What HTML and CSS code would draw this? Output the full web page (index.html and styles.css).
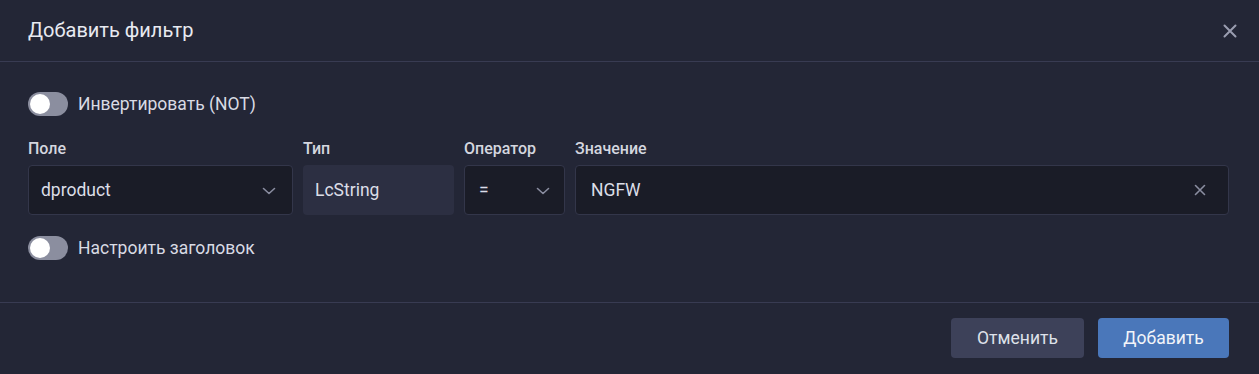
FILE: index.html
```html
<!DOCTYPE html>
<html lang="ru">
<head>
<meta charset="utf-8">
<title>Добавить фильтр</title>
<link rel="stylesheet" href="styles.css">
</head>
<body>
<div class="dialog">
  <div class="header">
    <div class="title">Добавить фильтр</div>
    <button class="close" aria-label="Закрыть">
      <svg width="14" height="14" viewBox="0 0 14 14"><path d="M1.5 1.5 L12.5 12.5 M12.5 1.5 L1.5 12.5" stroke="#9a9db0" stroke-width="2" stroke-linecap="round"/></svg>
    </button>
  </div>
  <div class="body">
    <div class="toggle-row">
      <span class="toggle"><span class="knob"></span></span>
      <span class="toggle-label">Инвертировать (NOT)</span>
    </div>
    <div class="fields">
      <div class="field f-field">
        <div class="label">Поле</div>
        <div class="box select">
          <span class="val">dproduct</span>
          <svg class="chev" width="14" height="8" viewBox="0 0 14 8"><path d="M1.5 1.5 L7 6.5 L12.5 1.5" fill="none" stroke="#8a8da0" stroke-width="1.6" stroke-linecap="round" stroke-linejoin="round"/></svg>
        </div>
      </div>
      <div class="field f-type">
        <div class="label">Тип</div>
        <div class="box readonly"><span class="val">LcString</span></div>
      </div>
      <div class="field f-op">
        <div class="label">Оператор</div>
        <div class="box select">
          <span class="val">=</span>
          <svg class="chev" width="14" height="8" viewBox="0 0 14 8"><path d="M1.5 1.5 L7 6.5 L12.5 1.5" fill="none" stroke="#8a8da0" stroke-width="1.6" stroke-linecap="round" stroke-linejoin="round"/></svg>
        </div>
      </div>
      <div class="field f-value">
        <div class="label">Значение</div>
        <div class="box select">
          <span class="val">NGFW</span>
          <svg class="clear" width="12" height="12" viewBox="0 0 12 12"><path d="M1.5 1.5 L10.5 10.5 M10.5 1.5 L1.5 10.5" stroke="#8a8da0" stroke-width="1.6" stroke-linecap="round"/></svg>
        </div>
      </div>
    </div>
    <div class="toggle-row second">
      <span class="toggle"><span class="knob"></span></span>
      <span class="toggle-label">Настроить заголовок</span>
    </div>
  </div>
  <div class="footer">
    <button class="btn cancel">Отменить</button>
    <button class="btn primary">Добавить</button>
  </div>
</div>
</body>
</html>
```
FILE: styles.css
```css
* { box-sizing: border-box; }
html, body { margin: 0; padding: 0; background: #232636; }
body { font-family: Roboto, "Liberation Sans", sans-serif; color: #d9dbe4; }
.dialog { width: 1259px; height: 374px; background: #232636; display: flex; flex-direction: column; }
.header { height: 62px; border-bottom: 1px solid #383b52; display: flex; align-items: center; justify-content: space-between; padding: 0 22px 0 28px; }
.title { font-size: 20px; color: #e8eaf1; padding-bottom: 1px; }
.close { background: none; border: 0; padding: 0; width: 14px; height: 14px; display: flex; cursor: pointer; }
.body { padding: 30px 30px 0 28px; height: 241px; border-bottom: 1px solid #383b52; }
.toggle-row { display: flex; align-items: center; height: 24px; }
.toggle-row.second { margin-top: 21px; }
.toggle { width: 40px; height: 24px; border-radius: 12px; background: #8b8e9f; position: relative; flex: none; }
.knob { position: absolute; left: 2px; top: 2px; width: 20px; height: 20px; border-radius: 50%; background: #ffffff; }
.toggle-label { margin-left: 10px; font-size: 17.5px; color: #d9dbe4; }
.fields { display: flex; gap: 10px; margin-top: 23px; }
.field { display: flex; flex-direction: column; }
.f-field { width: 265px; }
.f-type { width: 151px; }
.f-op { width: 101px; }
.f-value { flex: 1; }
.label { font-size: 16px; line-height: 20px; height: 20px; margin-bottom: 6px; color: #d4d6df; font-weight: 500; }
.box { height: 50px; border-radius: 4px; display: flex; align-items: center; justify-content: space-between; font-size: 17.5px; color: #dcdee7; }
.select { background: #1a1c27; border: 1px solid #33364a; padding: 0 16px 0 12px; }
.readonly { background: #2c2f42; padding: 0 12px; }
.f-op .select { padding: 0 14px 0 14px; }
.f-value .select { padding: 0 22px 0 15px; }
.chev { flex: none; margin-top: 1px; }
.clear { flex: none; }
.footer { flex: 1; display: flex; justify-content: flex-end; align-items: flex-start; gap: 14px; padding: 15px 30px 0 0; }
.btn { height: 40px; border: 0; border-radius: 4px; font-family: Roboto, "Liberation Sans", sans-serif; font-size: 17.5px; padding: 0; cursor: pointer; }
.cancel { background: #3d4159; color: #dfe1ea; width: 133px; }
.primary { background: #4a77ba; color: #f2f4f9; width: 131px; }
```
